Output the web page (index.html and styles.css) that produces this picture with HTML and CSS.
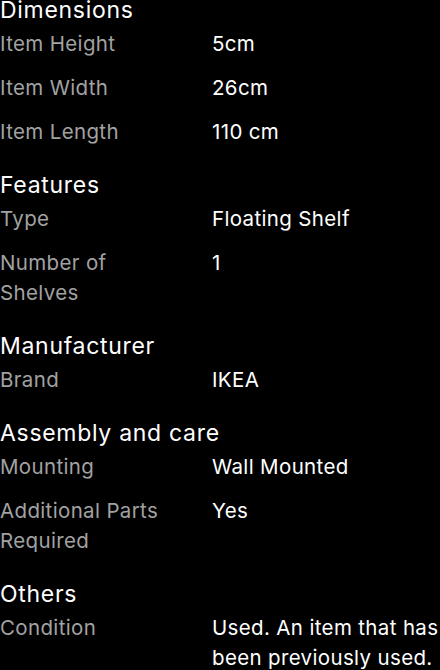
FILE: index.html
```html
<!DOCTYPE html>
<html lang="en">
<head>
<meta charset="utf-8">
<link rel="stylesheet" href="styles.css">
</head>
<body>
<main class="specs">
  <section class="group">
    <h2 class="group-title">Dimensions</h2>
    <dl class="rows">
      <div class="row"><dt>Item Height</dt><dd>5cm</dd></div>
      <div class="row"><dt>Item Width</dt><dd>26cm</dd></div>
      <div class="row"><dt>Item Length</dt><dd>110 cm</dd></div>
    </dl>
  </section>
  <section class="group">
    <h2 class="group-title">Features</h2>
    <dl class="rows">
      <div class="row"><dt>Type</dt><dd>Floating Shelf</dd></div>
      <div class="row"><dt>Number of Shelves</dt><dd>1</dd></div>
    </dl>
  </section>
  <section class="group">
    <h2 class="group-title">Manufacturer</h2>
    <dl class="rows">
      <div class="row"><dt>Brand</dt><dd>IKEA</dd></div>
    </dl>
  </section>
  <section class="group">
    <h2 class="group-title">Assembly and care</h2>
    <dl class="rows">
      <div class="row"><dt>Mounting</dt><dd>Wall Mounted</dd></div>
      <div class="row"><dt>Additional Parts Required</dt><dd>Yes</dd></div>
    </dl>
  </section>
  <section class="group">
    <h2 class="group-title">Others</h2>
    <dl class="rows">
      <div class="row"><dt>Condition</dt><dd>Used. An item that has been previously used.</dd></div>
    </dl>
  </section>
</main>
</body>
</html>
```
FILE: styles.css
```css
html, body {
  margin: 0;
  padding: 0;
  background: #000;
}
body {
  font-family: Inter, "Noto Sans", sans-serif;
  color: #fff;
  overflow: hidden;
}
.specs {
  display: flex;
  flex-direction: column;
  gap: 28px;
}
.group-title {
  margin: 0 0 9px;
  font-size: 23px;
  font-weight: 400;
  line-height: 20px;
  letter-spacing: 0.7px;
  color: #fff;
}
.rows {
  margin: 0;
  display: flex;
  flex-direction: column;
  gap: 14px;
}
.row {
  display: grid;
  grid-template-columns: 212px 1fr;
  font-size: 20.5px;
  line-height: 30px;
  letter-spacing: 0.35px;
}
.row dt {
  color: #a2a2a2;
  padding-right: 40px;
}
.row dd {
  margin: 0;
  color: #fff;
}
```
